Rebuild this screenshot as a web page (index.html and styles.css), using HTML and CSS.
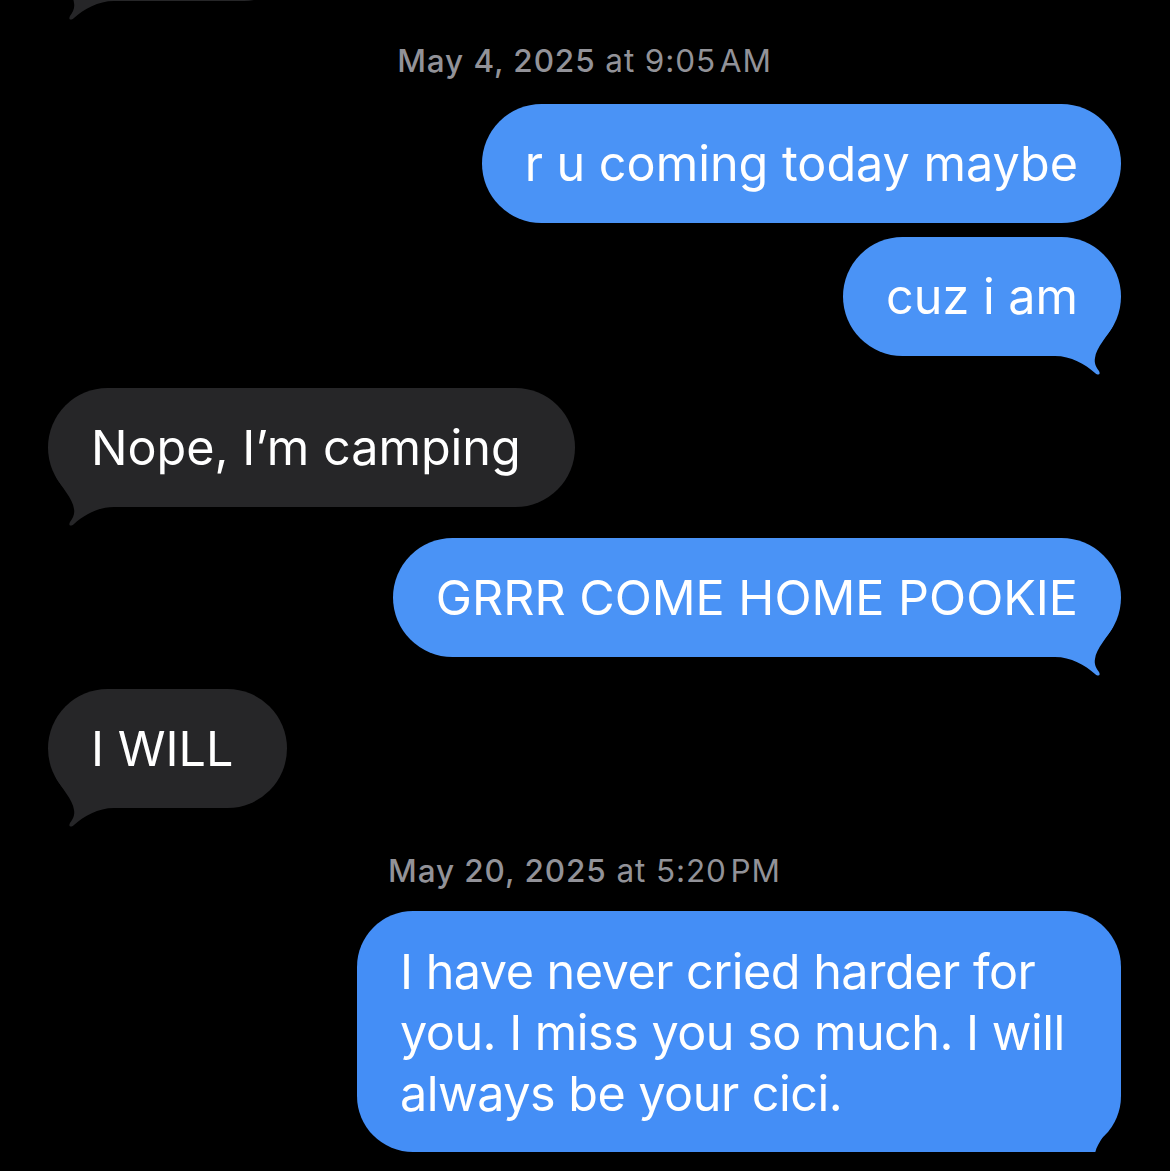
FILE: index.html
```html
<!DOCTYPE html>
<html lang="en">
<head>
  <meta charset="UTF-8">
  <meta name="viewport" content="width=device-width, initial-scale=1.0">
  <title>Messages</title>
  <link rel="stylesheet" href="styles.css">
</head>
<body>
  <div class="thread">
    <!-- previous message, scrolled off the top -->
    <div class="bubble in earlier">
      <svg class="tail" viewBox="0 0 70 60" aria-hidden="true"><path d="M4 38 C20 38 34 46 44 55 C47 57.5 50 57 48 53 C45 49 43 45 44 40 C45 30 57 17 62 8 L4 8 Z"/></svg>
    </div>

    <div class="stamp first"><span class="day">May 4, 2025</span> at 9:05&#8202;AM</div>

    <div class="bubble out">r u coming today maybe</div>
    <div class="bubble out gap-s">cuz i am
      <svg class="tail" viewBox="0 0 70 60" aria-hidden="true"><path d="M4 38 C20 38 34 46 44 55 C47 57.5 50 57 48 53 C45 49 43 45 44 40 C45 30 57 17 62 8 L4 8 Z"/></svg>
    </div>

    <div class="bubble in">Nope, I’m camping
      <svg class="tail" viewBox="0 0 70 60" aria-hidden="true"><path d="M4 38 C20 38 34 46 44 55 C47 57.5 50 57 48 53 C45 49 43 45 44 40 C45 30 57 17 62 8 L4 8 Z"/></svg>
    </div>

    <div class="bubble out">GRRR COME HOME POOKIE
      <svg class="tail" viewBox="0 0 70 60" aria-hidden="true"><path d="M4 38 C20 38 34 46 44 55 C47 57.5 50 57 48 53 C45 49 43 45 44 40 C45 30 57 17 62 8 L4 8 Z"/></svg>
    </div>

    <div class="bubble in">I WILL
      <svg class="tail" viewBox="0 0 70 60" aria-hidden="true"><path d="M4 38 C20 38 34 46 44 55 C47 57.5 50 57 48 53 C45 49 43 45 44 40 C45 30 57 17 62 8 L4 8 Z"/></svg>
    </div>

    <div class="stamp second"><span class="day">May 20, 2025</span> at 5:20&#8202;PM</div>

    <div class="bubble out long">I have never cried harder for you. I miss you so much. I will always be your cici.
      <svg class="tail" viewBox="0 0 70 60" aria-hidden="true"><path d="M4 38 C20 38 34 46 44 55 C47 57.5 50 57 48 53 C45 49 43 45 44 40 C45 30 57 17 62 8 L4 8 Z"/></svg>
    </div>
  </div>
</body>
</html>
```

FILE: styles.css
```css
body {
  margin: 0;
  background: #000;
  font-family: Inter, 'Noto Sans', sans-serif;
  color: #fff;
  overflow: hidden;
}
.thread {
  display: flex;
  flex-direction: column;
  padding: 0 49px 0 48px;
}
.stamp {
  align-self: center;
  font-size: 31.5px;
  line-height: 38px;
  letter-spacing: 0.9px;
  color: #929298;
}
.stamp .day {
  font-weight: 500;
}
.stamp.first {
  margin: 41px 0 24px;
}
.stamp.second {
  margin: 44px 0 21px;
}
.bubble {
  position: relative;
  max-width: 680px;
  padding: 28px 43px;
  font-size: 48.5px;
  line-height: 63px;
  border-radius: 60px;
}
.bubble.out {
  align-self: flex-end;
  background: #4a93f6;
  margin-top: 31px;
}
.bubble.out.gap-s {
  margin-top: 14px;
}
.stamp + .bubble.out {
  margin-top: 0;
}
.bubble.in {
  align-self: flex-start;
  background: #262628;
  margin-top: 32px;
  padding-right: 54px;
}
.bubble.earlier {
  width: 160px;
  height: 44px;
  margin-top: -99px;
  padding: 28px 43px;
}
.bubble.long {
  max-width: 678px;
  padding: 30px 43px 28px;
  line-height: 61px;
  letter-spacing: -0.5px;
  border-radius: 56px;
  background: #448ef6;
}
.tail {
  position: absolute;
  right: 0;
  bottom: -22px;
  width: 70px;
  height: 60px;
}
.bubble.out .tail {
  fill: #4a93f6;
}
.bubble.long .tail {
  fill: #448ef6;
}
.bubble.in .tail {
  right: auto;
  left: 0;
  transform: scaleX(-1);
  fill: #262628;
}
```
